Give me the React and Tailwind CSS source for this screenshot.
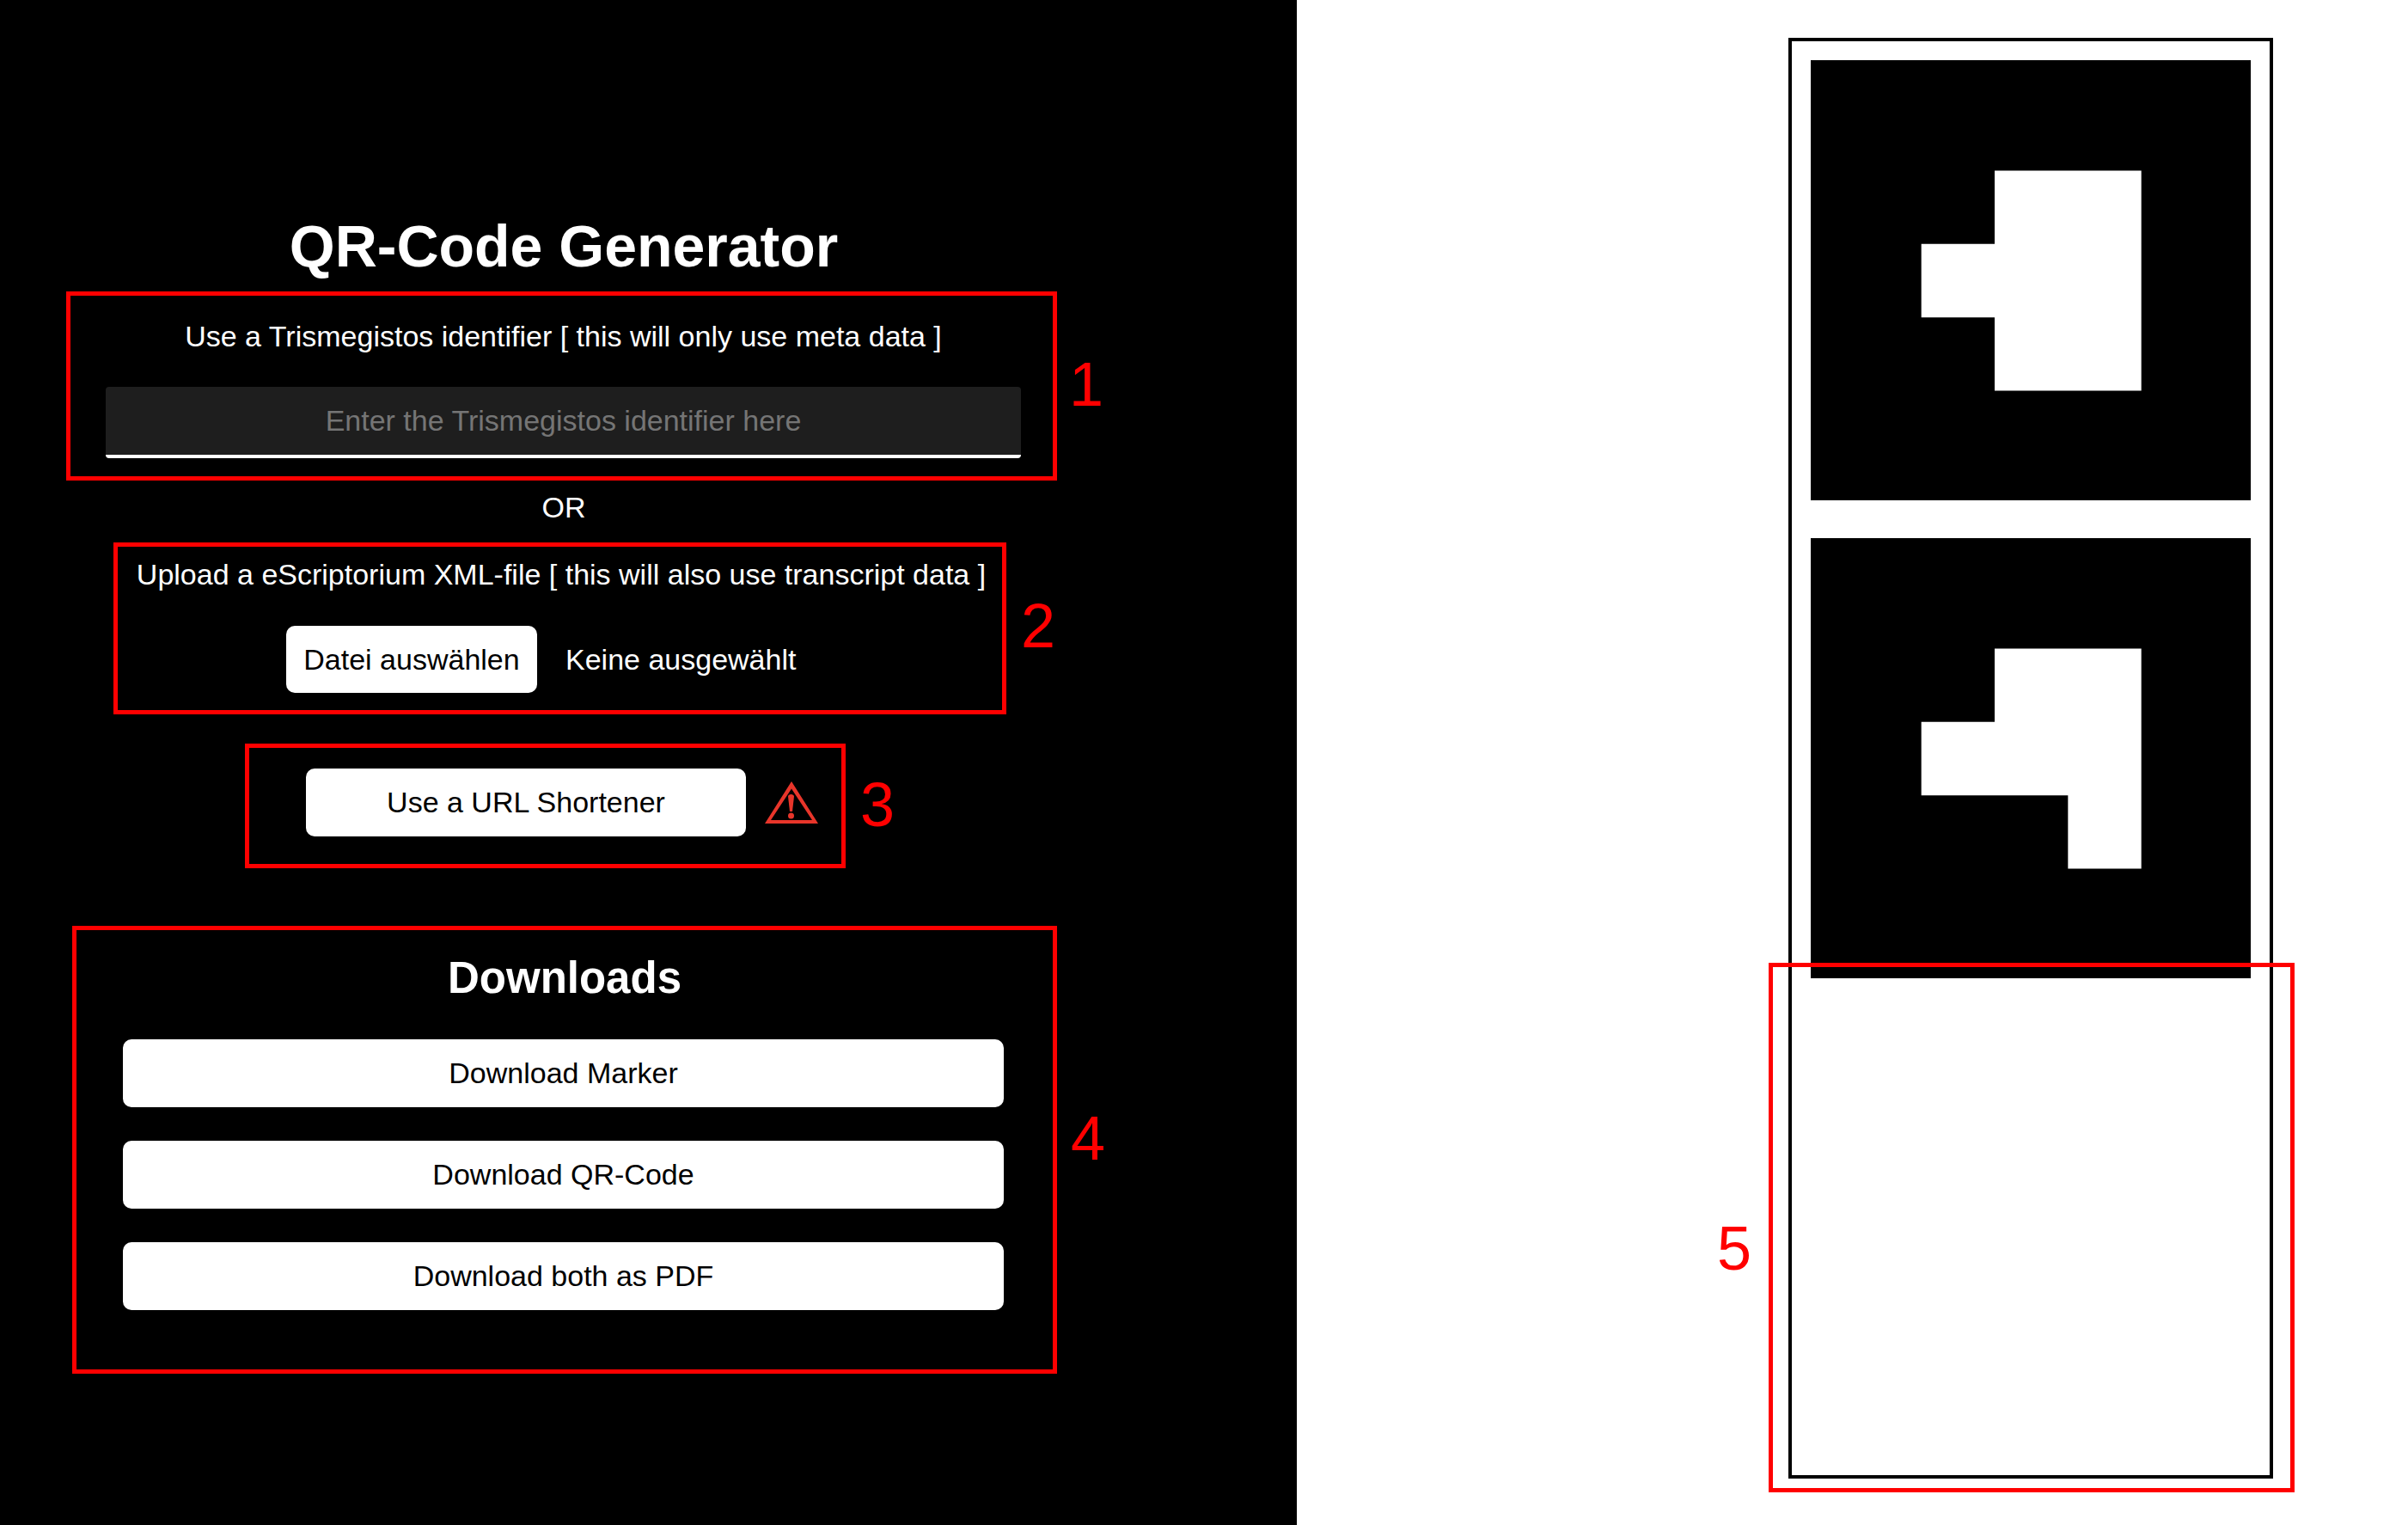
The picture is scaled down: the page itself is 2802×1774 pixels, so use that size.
const RED = 'border-[5px] border-[#ff0000]';
const NUM = "absolute text-[72px] leading-none text-[#ff0000]";
const BTN = "flex items-center justify-center bg-white text-black rounded-[10px]";

const MARKERS = [
  // white cells of the two sample markers, in a 6x6 viewbox
  "M2.5 1.5H4.5V4.5H2.5V3.5H1.5V2.5H2.5Z",
  "M2.5 1.5H4.5V4.5H3.5V3.5H1.5V2.5H2.5Z",
];

function Marker({ d }) {
  return (
    <svg viewBox="0 0 6 6" className="block w-[512px] h-[512px] bg-black blur-[0.5px]">
      <path d={d} fill="#ffffff" transform="translate(0.008 0.006)" />
    </svg>
  );
}

function WarnIcon() {
  return (
    <svg viewBox="0 0 62 49" className="w-[62px] h-[49px] shrink-0">
      <path fillRule="evenodd" fill="#e8352a" d="M31 0L62 49H0ZM31 8.5L7 45H55Z" />
      <path fill="#e8352a" d="M27 17.5C27 14 34 14 34 17.5L32 35H29Z" />
      <circle cx="30.5" cy="40" r="3.5" fill="#e8352a" />
    </svg>
  );
}

export default function App() {
  return (
    <div className="flex w-[2802px] h-[1774px] overflow-hidden bg-white text-[34px] font-['Liberation_Sans',Arial,sans-serif]">
      {/* left panel */}
      <div className="w-[1509px] h-full bg-black text-white pt-[246px]">
        <h1 className="w-[1312px] text-center text-[68px] leading-[80px] font-bold">QR-Code Generator</h1>

        <section className={`relative ml-[77px] mt-[13px] w-[1153px] h-[220px] ${RED}`}>
          <div className="ml-[41px] w-[1065px]">
            <p className="mt-[25px] h-[44px] leading-[44px] text-center whitespace-nowrap">Use a Trismegistos identifier [ this will only use meta data ]</p>
            <input
              placeholder="Enter the Trismegistos identifier here"
              className="mt-[37px] block w-full h-[83px] bg-[#1e1e1e] border-b-4 border-white rounded-t-[4px] rounded-b-[4px] text-center outline-none placeholder:text-[#757575]"
            />
          </div>
          <span className={`${NUM} left-full ml-[19px] top-[67px]`}>1</span>
        </section>

        <p className="w-[1312px] mt-[11px] h-[40px] leading-[40px] text-center">OR</p>

        <section className={`relative ml-[132px] mt-[21px] w-[1039px] h-[200px] ${RED}`}>
          <p className="ml-[3px] mt-[10px] h-[44px] leading-[44px] text-center whitespace-nowrap">Upload a eScriptorium XML-file [ this will also use transcript data ]</p>
          <div className="flex items-center ml-[196px] mt-[38px]">
            <button className={`${BTN} w-[292px] h-[78px]`}>Datei auswählen</button>
            <span className="ml-[33px]">Keine ausgewählt</span>
          </div>
          <span className={`${NUM} left-full ml-[22px] top-[56px]`}>2</span>
        </section>

        <section className={`relative ml-[285px] mt-[34px] w-[699px] h-[145px] ${RED}`}>
          <div className="flex items-center ml-[66px] mt-[24px]">
            <button className={`${BTN} w-[512px] h-[79px]`}>Use a URL Shortener</button>
            <span className="ml-[22px]"><WarnIcon /></span>
          </div>
          <span className={`${NUM} left-full ml-[22px] top-[30px]`}>3</span>
        </section>

        <section className={`relative ml-[84px] mt-[67px] w-[1146px] h-[521px] ${RED}`}>
          <h2 className="mt-[26px] h-[60px] leading-[60px] text-center text-[51px] font-bold">Downloads</h2>
          <div className="flex flex-col gap-[39px] ml-[54px] w-[1025px] mt-[41px]">
            <button className={`${BTN} h-[79px]`}>Download Marker</button>
            <button className={`${BTN} h-[79px]`}>Download QR-Code</button>
            <button className={`${BTN} h-[79px]`}>Download both as PDF</button>
          </div>
          <span className={`${NUM} left-full ml-[21px] top-[206px]`}>4</span>
        </section>
      </div>

      {/* right panel */}
      <div className="flex-1 pl-[572px] pt-[44px]">
        <div className="relative w-[564px] h-[1676px] border-4 border-black">
          <div className="flex flex-col gap-[44px] ml-[22px] mt-[22px]">
            {MARKERS.map(d => <Marker key={d} d={d} />)}
          </div>
          <div className={`absolute left-[-27px] top-[1072px] w-[612px] h-[616px] ${RED}`}>
            <span className={`${NUM} right-full mr-[25px] top-[291px]`}>5</span>
          </div>
        </div>
      </div>
    </div>
  );
}
